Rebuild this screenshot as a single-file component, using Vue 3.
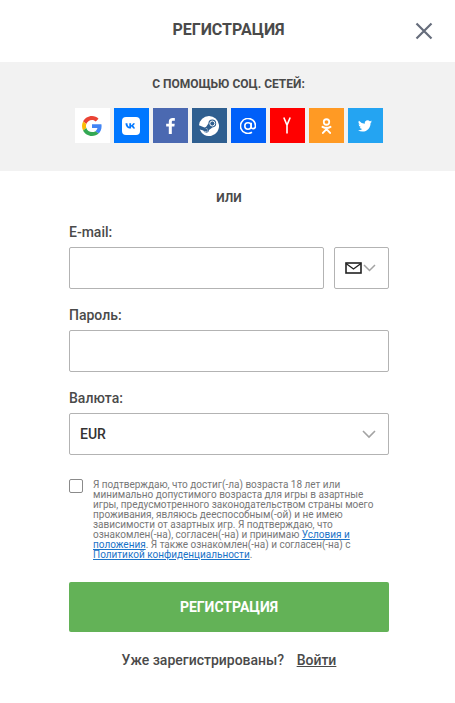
<script setup>
const socials = [
  { id: 'google', bg: '#ffffff' },
  { id: 'vk', bg: '#0077ff' },
  { id: 'fb', bg: '#4b69b1' },
  { id: 'steam', bg: '#2f5f90' },
  { id: 'mail', bg: '#005ff9' },
  { id: 'ya', bg: '#ff0000' },
  { id: 'ok', bg: '#ff9a24' },
  { id: 'tw', bg: '#24a4f2' }
]
</script>

<template>
  <div class="page">
    <header class="head">
      <h1>РЕГИСТРАЦИЯ</h1>
      <svg class="close" width="18" height="18" viewBox="0 0 18 18">
        <path d="M1.5 1.5l15 15M16.500 1.500l-15 15" stroke="#666d7c" stroke-width="2.2" fill="none" />
      </svg>
    </header>

    <section class="social">
      <div class="social-title">С ПОМОЩЬЮ СОЦ. СЕТЕЙ:</div>
      <div class="social-row">
        <a v-for="s in socials" :key="s.id" class="soc" :style="{ background: s.bg }">
          <svg v-if="s.id === 'google'" width="20" height="20" viewBox="0 0 48 48">
            <path fill="#ea4335" d="M24 9.500c3.900 0 6.900 1.600 9 3.600l6.700-6.600C35.600 2.700 30.300 0 24 0 14.600 0 6.600 5.400 2.600 13.200l7.800 6.100C12.300 13.600 17.600 9.500 24 9.500z" />
            <path fill="#4285f4" d="M47 24.500c0-1.600-.1-3.200-.4-4.500H24v9h13c-.6 3-2.300 5.600-4.900 7.300l7.600 5.900C44.100 37.900 47 31.800 47 24.500z" />
            <path fill="#fbbc05" d="M10.400 28.700c-.5-1.400-.8-3-.8-4.700s.3-3.300.8-4.700l-7.800-6.100C.9 16.400 0 20.100 0 24s.9 7.600 2.600 10.800z" />
            <path fill="#34a853" d="M24 48c6.500 0 11.900-2.100 15.800-5.800l-7.600-5.900c-2.100 1.400-4.800 2.200-8.200 2.200-6.400 0-11.700-4.100-13.600-9.800l-7.800 6.100C6.600 42.600 14.600 48 24 48z" />
          </svg>
          <svg v-else-if="s.id === 'vk'" width="18" height="18" viewBox="0 0 18 18">
            <rect width="18" height="18" rx="4" fill="#fff" />
            <path d="M3.500 6.200h1.900c.1 2.300 1.100 3.300 1.900 3.500V6.200h1.800v2c.8-.1 1.600-1 1.900-2h1.800c-.3 1.300-1.200 2.200-1.900 2.600.7.300 1.700 1.100 2.200 2.800h-2c-.4-1.100-1.200-1.900-2-2v2H8.700C5.500 11.600 3.600 9.400 3.500 6.200z" fill="#0077ff" />
          </svg>
          <svg v-else-if="s.id === 'fb'" width="9" height="16" viewBox="1 1 9.200 17">
            <path d="M7 18V10h2.700l.4-3H7V5.200c0-.9.300-1.400 1.500-1.400h1.700V1.100C9.900 1 8.900 1 7.800 1 5.400 1 3.800 2.400 3.800 4.900V7H1v3h2.800v8z" fill="#fff" />
          </svg>
          <svg v-else-if="s.id === 'steam'" width="20" height="20" viewBox="0 0 20 20">
            <path d="M10 0a10 10 0 0 0-10 9.300l5.400 2.200a2.800 2.800 0 0 1 1.600-.5l2.400-3.500a3.900 3.900 0 1 1 4 3.900l-3.400 2.500a2.900 2.900 0 0 1-5.700.7L.7 13.600A10 10 0 1 0 10 0z" fill="#fff" />
            <circle cx="13.300" cy="7.500" r="2.500" fill="none" stroke="#fff" stroke-width="1" />
            <path d="M5 15.300a2 2 0 0 0 3.800-.9 2 2 0 0 0-2.300-2l1.200.5a1.400 1.400 0 0 1-1.100 2.600z" fill="#fff" />
          </svg>
          <svg v-else-if="s.id === 'mail'" width="16" height="16" viewBox="1 1 16 16">
            <circle cx="9" cy="9" r="3.200" fill="none" stroke="#fff" stroke-width="1.600" />
            <path d="M12.200 5.800V10c0 2.400 4.300 2.300 4.300-1A7.500 7.500 0 1 0 13 15.300" fill="none" stroke="#fff" stroke-width="1.600" />
          </svg>
          <svg v-else-if="s.id === 'ya'" width="8" height="17" viewBox="0 0 10 20">
            <path d="M1 0l4 9.500V20M9 0L5 9.500" fill="none" stroke="#fff" stroke-width="2" />
          </svg>
          <svg v-else-if="s.id === 'ok'" width="11" height="16" viewBox="0 0 12 18">
            <circle cx="6" cy="4.500" r="3.100" fill="none" stroke="#fff" stroke-width="2" />
            <path d="M1.500 10c2.700 1.600 6.300 1.600 9 0M6 11v1.500M6 12.500L2 16.800M6 12.500l4 4.300" fill="none" stroke="#fff" stroke-width="2.200" stroke-linecap="round" />
          </svg>
          <svg v-else width="14" height="12" viewBox="0 0 24 20">
            <path d="M24 2.400a9.800 9.800 0 0 1-2.800.8A5 5 0 0 0 23.300.5a9.800 9.800 0 0 1-3.100 1.200 4.900 4.900 0 0 0-8.400 4.500A14 14 0 0 1 1.700.9a4.900 4.900 0 0 0 1.500 6.600 4.900 4.900 0 0 1-2.200-.6v.1a4.900 4.900 0 0 0 3.900 4.800 4.900 4.900 0 0 1-2.200.1 4.900 4.900 0 0 0 4.600 3.400A9.900 9.900 0 0 1 0 17.300 13.900 13.900 0 0 0 7.500 19.500c9.100 0 14-7.500 14-14v-.6A10 10 0 0 0 24 2.400z" fill="#fff" />
          </svg>
        </a>
      </div>
    </section>

    <div class="or">ИЛИ</div>

    <form class="form" @submit.prevent>
      <label class="label">E-mail:</label>
      <div class="email-row">
        <input class="input" type="text" />
        <div class="type-select">
          <svg width="17" height="12" viewBox="0 0 17 12">
            <rect x="1" y="1" width="15" height="10" fill="none" stroke="#222" stroke-width="1.600" />
            <path d="M1 1.500l7.500 5.500L16 1.500" fill="none" stroke="#222" stroke-width="1.400" />
          </svg>
          <svg width="13" height="8" viewBox="0 0 13 8">
            <path d="M1 1l5.500 5.500L12 1" fill="none" stroke="#a3a3a3" stroke-width="1.500" />
          </svg>
        </div>
      </div>

      <label class="label">Пароль:</label>
      <input class="input" type="password" />

      <label class="label">Валюта:</label>
      <div class="currency">
        <span>EUR</span>
        <svg width="14" height="9" viewBox="0 0 14 9">
          <path d="M1 1l6 6 6-6" fill="none" stroke="#a3a3a3" stroke-width="1.600" />
        </svg>
      </div>

      <div class="agree">
        <span class="check"></span>
        <p>
          Я подтверждаю, что достиг(-ла) возраста 18 лет или минимально допустимого возраста для игры в азартные
          игры, предусмотренного законодательством страны моего проживания, являюсь дееспособным(-ой) и не имею
          зависимости от азартных игр. Я подтверждаю, что ознакомлен(-на), согласен(-на) и принимаю
          <a>Условия и положения</a>. Я также ознакомлен(-на) и согласен(-на) с
          <a>Политикой конфиденциальности</a>.
        </p>
      </div>

      <button class="submit" type="button">РЕГИСТРАЦИЯ</button>

      <div class="login">Уже зарегистрированы? <a>Войти</a></div>
    </form>
  </div>
</template>

<style scoped>
* {
  box-sizing: border-box;
}

.page {
  width: 455px;
  height: 703px;
  background: #fff;
  color: #444;
  font-family: Roboto, "Liberation Sans", sans-serif;
  overflow: hidden;
}

.head {
  height: 62px;
  display: flex;
  align-items: center;
  justify-content: center;
  padding-left: 2px;
  position: relative;
}

.head h1 {
  margin: 0 0 4px;
  font-size: 16px;
  font-weight: 700;
  color: #4a4a4a;
}

.close {
  position: absolute;
  left: 415px;
  top: 22px;
}

.social {
  height: 109px;
  background: #f2f2f2;
  padding: 15px 0 0 2px;
}

.social-title {
  text-align: center;
  font-size: 12px;
  line-height: 14px;
  font-weight: 700;
  color: #4a4a4a;
}

.social-row {
  display: flex;
  justify-content: center;
  gap: 4px;
  margin-top: 17px;
}

.soc {
  width: 35px;
  height: 35px;
  display: flex;
  align-items: center;
  justify-content: center;
}

.or {
  text-align: center;
  font-size: 12px;
  line-height: 16px;
  font-weight: 700;
  margin-top: 19px;
  padding-left: 3px;
  color: #4a4a4a;
}

.form {
  padding: 0 66px 0 69px;
  display: flex;
  flex-direction: column;
}

.label {
  font-size: 14px;
  line-height: 16px;
  font-weight: 500;
  color: #4a4a4a;
  margin-top: 18px;
  margin-bottom: 7px;
}

.email-row {
  display: flex;
  gap: 10px;
}

.input {
  display: block;
  width: 100%;
  min-width: 0;
  height: 42px;
  border: 1px solid #b3b3b3;
  border-radius: 2px;
  background: #fff;
  outline: none;
}

.email-row .input {
  flex: 1;
}

.form > .input {
  flex: none;
}

.type-select {
  width: 55px;
  height: 42px;
  flex: none;
  border: 1px solid #b3b3b3;
  border-radius: 2px;
  display: flex;
  align-items: center;
  justify-content: center;
  gap: 1px;
  padding-right: 2px;
}

.currency {
  height: 42px;
  border: 1px solid #b3b3b3;
  border-radius: 2px;
  display: flex;
  align-items: center;
  justify-content: space-between;
  padding: 0 12px 0 10px;
  font-size: 14px;
  font-weight: 500;
  color: #333;
}

.agree {
  display: flex;
  gap: 10px;
  margin-top: 24px;
}

.check {
  width: 14px;
  height: 14px;
  flex: none;
  border: 1px solid #8a8a8a;
  border-radius: 2px;
}

.agree p {
  margin: 1px 0 0;
  width: 285px;
  font-size: 10px;
  line-height: 10px;
  color: #777;
}

.agree a {
  color: #1a73c8;
  text-decoration: underline;
}

.submit {
  height: 50px;
  margin-top: 22px;
  background: #63b257;
  border: none;
  border-radius: 2px;
  color: #fff;
  font-family: inherit;
  font-size: 14px;
  font-weight: 700;
}

.login {
  margin-top: 20px;
  text-align: center;
  font-size: 14px;
  line-height: 16px;
  font-weight: 500;
  color: #4a4a4a;
}

.login a {
  margin-left: 9px;
  text-decoration: underline;
}
</style>

<style>
html, body {
  background: #fff;
}
</style>
